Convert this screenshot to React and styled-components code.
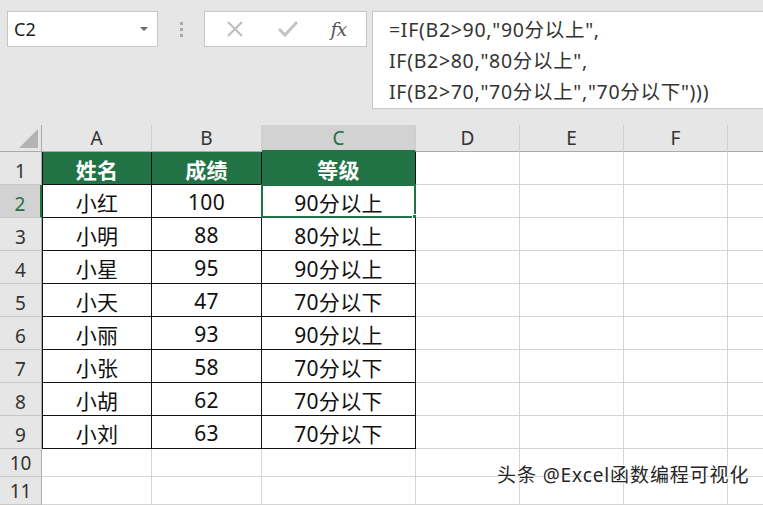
import React from 'react';
import styled, { createGlobalStyle } from 'styled-components';

const Global = createGlobalStyle`
  html, body { margin: 0; padding: 0; background: #e6e6e6; overflow: hidden; }
  * { box-sizing: border-box; }
  body { font-family: "Noto Sans", "Noto Sans CJK SC", sans-serif; }
`;

const Page = styled.div`
  position: relative;
  width: 763px;
  height: 505px;
  overflow: hidden;
  background: #e6e6e6;
`;

const Toolbar = styled.div`
  display: flex;
  align-items: flex-start;
  height: 125px;
  padding: 11px 0 0 7px;
`;

const NameBox = styled.div`
  width: 151px;
  height: 36px;
  background: #fff;
  border: 1px solid #c6c6c6;
  display: flex;
  align-items: center;
  justify-content: space-between;
  padding: 0 9px 0 6px;
  font-size: 18px;
  color: #222;
`;

const Caret = styled.span`
  width: 0;
  height: 0;
  border-left: 4px solid transparent;
  border-right: 4px solid transparent;
  border-top: 4px solid #6a6a6a;
`;

const Grip = styled.div`
  width: 46px;
  height: 36px;
  display: flex;
  flex-direction: column;
  align-items: center;
  justify-content: center;
  gap: 3px;
  span { width: 3px; height: 3px; background: #a8a8a8; }
`;

const FxBox = styled.div`
  width: 163px;
  height: 36px;
  background: #fff;
  border: 1px solid #c6c6c6;
  display: flex;
  align-items: center;
  justify-content: space-around;
  padding: 0 4px;
`;

const Fx = styled.span`
  font-family: "DejaVu Serif", "Liberation Serif", serif;
  font-style: italic;
  font-size: 19px;
  color: #555;
  letter-spacing: -1px;
`;

const FormulaBar = styled.div`
  margin-left: 5px;
  flex: 1;
  height: 98px;
  background: #fff;
  border: 1px solid #c6c6c6;
  border-right: none;
  padding: 2px 0 0 16px;
  font-size: 19.5px;
  letter-spacing: 0.7px;
  line-height: 31px;
  color: #333;
  white-space: pre;
`;

const Sheet = styled.div`
  display: grid;
  grid-template-columns: 42px 110px 110px 154px 104px 104px 104px 104px;
  grid-template-rows: 27px repeat(9, 33px) 28px 28px;
  background: #fff;
  width: 832px;
`;

const Corner = styled.div`
  background: #e6e6e6;
  border-right: 1px solid #ababab;
  border-bottom: 1px solid #ababab;
  position: relative;
  &::after {
    content: '';
    position: absolute;
    right: 3px;
    bottom: 3px;
    width: 0;
    height: 0;
    border-left: 19px solid transparent;
    border-bottom: 19px solid #b4b4b4;
  }
`;

const ColHead = styled.div`
  background: ${p => (p.$sel ? '#d2d2d2' : '#e6e6e6')};
  border-right: 1px solid #cfcfcf;
  border-bottom: ${p => (p.$sel ? '2px solid #217346' : '1px solid #ababab')};
  display: flex;
  align-items: center;
  justify-content: center;
  font-size: 19px;
  color: ${p => (p.$sel ? '#1e6e42' : '#333')};
  padding-top: ${p => (p.$sel ? '1px' : '0')};
`;

const RowHead = styled.div`
  background: ${p => (p.$sel ? '#d2d2d2' : '#e6e6e6')};
  border-right: ${p => (p.$sel ? '2px solid #217346' : '1px solid #ababab')};
  border-bottom: 1px solid #c8c8c8;
  display: flex;
  align-items: flex-end;
  justify-content: center;
  font-size: 19px;
  color: ${p => (p.$sel ? '#217346' : '#333')};
`;

const Cell = styled.div`
  position: relative;
  display: flex;
  align-items: center;
  justify-content: center;
  font-size: 21px;
  letter-spacing: 0.3px;
  color: ${p => (p.$head ? '#fff' : '#111')};
  font-weight: ${p => (p.$head ? 700 : 400)};
  background: ${p => (p.$head ? '#217346' : '#fff')};
  border-right: 1px solid ${p => (p.$table ? '#111' : '#d4d4d4')};
  border-bottom: 1px solid ${p => (p.$table ? '#111' : '#d4d4d4')};
  border-left: ${p => (p.$first ? '1px solid #111' : 'none')};
  padding-top: 2px;
`;

const Selection = styled.div`
  position: absolute;
  left: -1px;
  top: -1px;
  right: -1px;
  bottom: -1px;
  border: 2px solid #217346;
  pointer-events: none;
`;

const Handle = styled.div`
  position: absolute;
  right: -5px;
  bottom: -5px;
  width: 7px;
  height: 7px;
  background: #217346;
  border: 1px solid #fff;
`;

const Watermark = styled.div`
  position: absolute;
  left: 497px;
  top: 460px;
  font-size: 19px;
  color: #262626;
  white-space: nowrap;
  letter-spacing: 0.9px;
  text-shadow: 1px 0 #fff, -1px 0 #fff, 0 1px #fff, 0 -1px #fff;
`;

const cols = ['A', 'B', 'C', 'D', 'E', 'F', 'G'];
const data = [
  ['姓名', '成绩', '等级'],
  ['小红', '100', '90分以上'],
  ['小明', '88', '80分以上'],
  ['小星', '95', '90分以上'],
  ['小天', '47', '70分以下'],
  ['小丽', '93', '90分以上'],
  ['小张', '58', '70分以下'],
  ['小胡', '62', '70分以下'],
  ['小刘', '63', '70分以下'],
];

const X = () => (
  <svg width="20" height="20" viewBox="0 0 20 20">
    <path d="M3 3 L17 17 M17 3 L3 17" stroke="#bdbdbd" strokeWidth="2" fill="none" />
  </svg>
);
const Check = () => (
  <svg width="22" height="20" viewBox="0 0 22 20">
    <path d="M2 10 L8 16 L20 3" stroke="#c4c4c4" strokeWidth="3" fill="none" />
  </svg>
);

export default function App() {
  const rows = [];
  for (let r = 1; r <= 11; r++) {
    rows.push(
      <RowHead key={`h${r}`} $sel={r === 2}>{r}</RowHead>
    );
    cols.forEach((c, ci) => {
      const inTable = r <= 9 && ci < 3;
      const val = inTable ? data[r - 1][ci] : '';
      rows.push(
        <Cell key={`${c}${r}`} $table={inTable} $head={inTable && r === 1} $first={inTable && ci === 0}>
          {val}
          {r === 2 && ci === 2 && (
            <Selection>
              <Handle />
            </Selection>
          )}
        </Cell>
      );
    });
  }
  return (
    <Page>
      <Global />
      <Toolbar>
        <NameBox>
          C2
          <Caret />
        </NameBox>
        <Grip>
          <span />
          <span />
          <span />
        </Grip>
        <FxBox>
          <X />
          <Check />
          <Fx>fx</Fx>
        </FxBox>
        <FormulaBar>
          {'=IF(B2>90,"90分以上",\nIF(B2>80,"80分以上",\nIF(B2>70,"70分以上","70分以下")))'}
        </FormulaBar>
      </Toolbar>
      <Sheet>
        <Corner />
        {cols.map(c => (
          <ColHead key={c} $sel={c === 'C'}>{c === 'G' ? '' : c}</ColHead>
        ))}
        {rows}
      </Sheet>
      <Watermark>头条 @Excel函数编程可视化</Watermark>
    </Page>
  );
}
